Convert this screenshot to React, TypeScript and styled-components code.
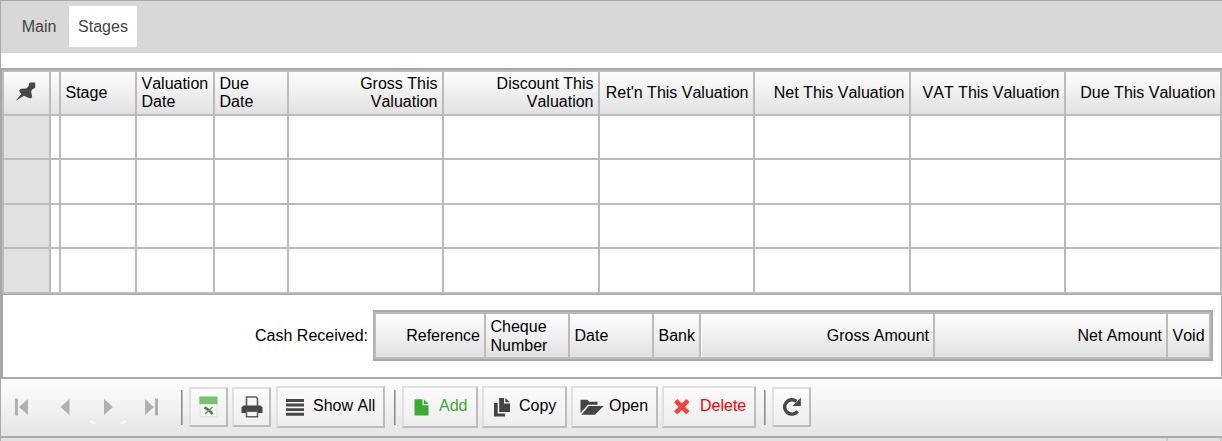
import React from 'react';
import styled, { createGlobalStyle, css } from 'styled-components';

const GlobalStyle = createGlobalStyle`
  * { box-sizing: border-box; }
  body {
    margin: 0;
    background: #fff;
    color: #000;
    font: 16px/18px "Liberation Sans", Arial, sans-serif;
    font-kerning: none;
    overflow: hidden;
  }
`;

const Page = styled.main`
  width: 1222px;
  height: 441px;
  overflow: hidden;
  border-top: 1px solid #a9a9a9;
  display: flex;
  flex-direction: column;
`;

const TabBar = styled.nav`
  height: 52px;
  flex: none;
  display: flex;
  align-items: flex-start;
  gap: 4px;
  padding: 5px 0 0 12px;
  background: #d8d8d8;
  border-left: 1px solid #a9a9a9;
`;

const Tab = styled.a<{ $active?: boolean; $width: number }>`
  width: ${p => p.$width}px;
  height: 41px;
  line-height: 41px;
  text-align: center;
  color: #444;
  background: ${p => (p.$active ? '#fff' : 'transparent')};
`;

const Spacer = styled.div`
  height: 15px;
  flex: none;
  border-left: 1px solid #a9a9a9;
`;

const headFill = css`
  background: linear-gradient(#fefefe, #e1e1e1);
`;

const StagesGrid = styled.section`
  flex: none;
  height: 227px;
  display: grid;
  grid-template-columns: 45px 8px 74px 76px 72px 153px 154px 153px 154px 153px 154px;
  grid-template-rows: 42px 42px 43px 42px 43px;
  gap: 2px;
  padding: 2px;
  background: #bbb;
  border: solid #a9a9a9;
  border-width: 2px 0 1px 2px;
`;

const HeadCell = styled.div<{ $right?: boolean; $lit?: boolean }>`
  ${headFill}
  display: flex;
  align-items: center;
  justify-content: ${p => (p.$right ? 'flex-end' : 'flex-start')};
  text-align: ${p => (p.$right ? 'right' : 'left')};
  padding: 0 4.5px 1px;
  white-space: pre;
  border-left: ${p => (p.$lit ? '1px solid #fff' : '0')};

  &:empty {
    padding: 0;
  }
`;

const CashHeadCell = styled(HeadCell)`
  padding: 0 4px 0 4.5px;
  line-height: 19px;
`;

const PinCell = styled.div`
  ${headFill}
  padding: 9px 0 0 11px;
`;

const Cell = styled.div<{ $selector?: boolean }>`
  background: ${p => (p.$selector ? '#e1e1e1' : '#fff')};
`;

const CashPanel = styled.section`
  flex: none;
  height: 84px;
  display: flex;
  align-items: flex-start;
  justify-content: flex-end;
  padding: 15px 8px 0 0;
  border: solid #a9a9a9;
  border-width: 0 1px 2px 3px;
`;

const CashLabel = styled.label`
  line-height: 51px;
  margin-right: 5px;
`;

const CashGrid = styled.div`
  display: grid;
  grid-template-columns: 108px 82px 82px 45px 232px 231px 41px;
  grid-template-rows: 43px;
  gap: 2px;
  padding: 2px;
  background: #bbb;
  border: solid #a9a9a9;
  border-width: 2px 2px 2px 1px;
`;

const Toolbar = styled.div`
  flex: none;
  height: 57px;
  display: flex;
  align-items: flex-start;
  border-left: 1px solid #a9a9a9;
  background: linear-gradient(#fefefe, #e5e5e5);
`;

const NavGroup = styled.div`
  display: flex;
  width: 180px;
  flex: none;
  padding: 9px 0 0;
`;

const NavButton = styled.button`
  width: 43.3px;
  height: 38px;
  padding: 0 3px 0 0;
  border: 0;
  background: none;
  display: flex;
  justify-content: center;
  align-items: center;
`;

const Separator = styled.i<{ $after: number }>`
  width: 2px;
  height: 35px;
  flex: none;
  margin: 11px ${p => p.$after}px 0 0;
  background: linear-gradient(90deg, #8c8c8c 50%, #bababa 50%);
`;

const Button = styled.button<{ $width: number; $after?: number; $color?: string; $pad?: number }>`
  width: ${p => p.$width}px;
  height: 42px;
  flex: none;
  margin: 7px ${p => p.$after ?? 4}px 0 0;
  padding: 0 0 0 ${p => p.$pad ?? 7}px;
  display: flex;
  align-items: center;
  font: inherit;
  font-kerning: none;
  white-space: nowrap;
  color: ${p => p.$color ?? '#000'};
  background: linear-gradient(#fbfbfb, #eee);
  border: 2px solid;
  border-color: #e0e0e0 #bcbcbc #bcbcbc #e0e0e0;
`;

const IconButton = styled(Button)`
  height: 40px;
  margin-top: 8px;
`;

const ButtonText = styled.span<{ $gap: number }>`
  margin: 0 0 3px ${p => p.$gap}px;
`;

const StatusBar = styled.footer`
  flex: none;
  height: 5px;
  display: flex;
  border-left: 1px solid #a9a9a9;
`;

const StatusPane = styled.div<{ $width: number }>`
  width: ${p => p.$width}px;
  background: #e1e1e1;
  border: solid #a9a9a9;
  border-width: 2px 0 0;
  box-shadow: inset -2px 0 #ccc;
`;

const Svg = styled.svg`
  display: block;
  flex: none;
  overflow: visible;
`;

const PinIcon = () => (
  <Svg width="24" height="24" fill="#484848">
    <path d="M.8 19.8 L6.2 13 L4 9.2 L6 7.7 L11.3 7.5 L13.6 5 L14 2.2 L15.5 1.5 L19.8 1.5 L20.3 3 L20.2 6.8 L17.2 8.4 L16 10.8 L17.2 15.6 L16 17.4 L12.5 16.6 L9 14.8 Z" />
  </Svg>
);

const NavIcon = ({ kind }: { kind: 'first' | 'prev' | 'next' | 'last' }) => (
  <Svg width="13" height="18" fill="#b0b0b0">
    {kind === 'first' && <path d="M0 .5h3v17H0zM13 1v16L4 9z" />}
    {kind === 'prev' && <path d="M11.5 1v16l-9-8z" />}
    {kind === 'next' && <path d="M3 1v16l9-8z" />}
    {kind === 'next' && (
      <path
        d="M-10 22v1q0 2 3 2h1M20 25h1q3 0 3-2v-1"
        fill="none"
        stroke="#fcfcfc"
        strokeWidth="1.5"
      />
    )}
    {kind === 'last' && <path d="M0 1v16L9 9zM10 .5h3v17h-3z" />}
  </Svg>
);

const SheetIcon = () => (
  <Svg width="19" height="22">
    <path fill="#f5f7f4" stroke="#dce1db" d="M1 7h17v13.8H1z" />
    <path fill="#73c667" d="M.3.5h18.2v7.7H.3z" />
    <path d="M5.5 11.3q3.5 1.6 8 6.6" fill="none" stroke="#3f7f38" strokeWidth="2.4" />
    <path d="M13.6 11l-7.4 7" stroke="#6f9d69" strokeWidth="1.6" />
  </Svg>
);

const PrinterIcon = () => (
  <Svg width="22" height="22">
    <path fill="none" stroke="#5c5c5c" strokeWidth="1.6" d="M5.5 10V1h9.5l1.5 1.5V10" />
    <path fill="#444" d="M2.5 9.5h17l2 2V17H.5v-5.5z" />
    <path fill="#f5f5f5" stroke="#5c5c5c" strokeWidth="1.5" d="M5.5 15.3h11v5.5h-11z" />
  </Svg>
);

const ListIcon = () => (
  <Svg width="18" height="17" fill="#484848">
    <path d="M0 0h18v2.9H0zM0 4.6h18v2.9H0zM0 9.2h18v2.9H0zM0 13.8h18v2.9H0z" />
  </Svg>
);

const AddIcon = () => (
  <Svg width="15" height="18" fill="#39ab31">
    <path d="M.5 1.3h8v6h6v10.2H.5zM9.8 1.3l4.7 4.7H9.8z" />
  </Svg>
);

const CopyIcon = () => (
  <Svg width="16" height="19" fill="#444">
    <path d="M5.2 0H10v5.5h6V14H5.2zM11.3 0L16 4.3h-4.7zM0 5h3.7v10.5H11v3H0z" />
  </Svg>
);

const FolderIcon = () => (
  <Svg width="24" height="17" fill="#444">
    <path d="M.5.7h7l1.7 2h8.3v3H8L.5 14zM8.8 7H23.5L15 15.8H1.3z" />
  </Svg>
);

const CrossIcon = () => (
  <Svg width="18" height="18">
    <path d="M2.7 2.7l12.2 12.2M14.9 2.7L2.7 14.9" stroke="#f8423e" strokeWidth="4.6" />
  </Svg>
);

const ReloadIcon = () => (
  <Svg width="22" height="20">
    <path d="M16.6 14.2a7.2 7.2 0 1 1-1.2-9.8" fill="none" stroke="#484848" strokeWidth="3.4" />
    <path d="M19.8.8v8.2h-8.4z" fill="#484848" />
  </Svg>
);

const stageColumns = [
  { text: '' },
  { text: 'Stage' },
  { text: 'Valuation\nDate' },
  { text: 'Due\nDate' },
  { text: 'Gross This\nValuation', right: true },
  { text: 'Discount This\nValuation', right: true },
  { text: "Ret'n This Valuation", right: true },
  { text: 'Net This Valuation', right: true },
  { text: 'VAT This Valuation', right: true },
  { text: 'Due This Valuation', right: true },
];

const cashColumns = [
  { text: 'Reference', right: true },
  { text: 'Cheque\nNumber' },
  { text: 'Date' },
  { text: 'Bank' },
  { text: 'Gross Amount', right: true, lit: true },
  { text: 'Net Amount', right: true },
  { text: 'Void' },
];

export default function App() {
  return (
    <>
      <GlobalStyle />
      <Page>
        <TabBar>
          <Tab $width={52}>Main</Tab>
          <Tab $width={68} $active>Stages</Tab>
        </TabBar>
        <Spacer />
        <StagesGrid>
          <PinCell><PinIcon /></PinCell>
          {stageColumns.map(c => (
            <HeadCell key={c.text} $right={c.right}>{c.text || null}</HeadCell>
          ))}
          {Array.from({ length: 44 }, (_, i) => (
            <Cell key={i} $selector={i % 11 === 0} />
          ))}
        </StagesGrid>
        <CashPanel>
          <CashLabel>Cash Received:</CashLabel>
          <CashGrid>
            {cashColumns.map(c => (
              <CashHeadCell key={c.text} $right={c.right} $lit={c.lit}>{c.text}</CashHeadCell>
            ))}
          </CashGrid>
        </CashPanel>
        <Toolbar>
          <NavGroup>
            <NavButton><NavIcon kind="first" /></NavButton>
            <NavButton><NavIcon kind="prev" /></NavButton>
            <NavButton><NavIcon kind="next" /></NavButton>
            <NavButton><NavIcon kind="last" /></NavButton>
          </NavGroup>
          <Separator $after={6} />
          <IconButton $width={39} $pad={8}><SheetIcon /></IconButton>
          <IconButton $width={39} $after={5} $pad={7}><PrinterIcon /></IconButton>
          <Button $width={109} $after={9} $pad={8}><ListIcon /><ButtonText $gap={9}>Show All</ButtonText></Button>
          <Separator $after={6} />
          <Button $width={76} $pad={10} $color="#39ab31"><AddIcon /><ButtonText $gap={10}>Add</ButtonText></Button>
          <Button $width={85} $pad={10}><CopyIcon /><ButtonText $gap={9}>Copy</ButtonText></Button>
          <Button $width={87} $pad={7}><FolderIcon /><ButtonText $gap={5}>Open</ButtonText></Button>
          <Button $width={94} $after={8} $pad={9} $color="#f00"><CrossIcon /><ButtonText $gap={9}>Delete</ButtonText></Button>
          <Separator $after={6} />
          <IconButton $width={39} $pad={7}><ReloadIcon /></IconButton>
        </Toolbar>
        <StatusBar>
          <StatusPane $width={1167} />
          <StatusPane $width={54} />
        </StatusBar>
      </Page>
    </>
  );
}
